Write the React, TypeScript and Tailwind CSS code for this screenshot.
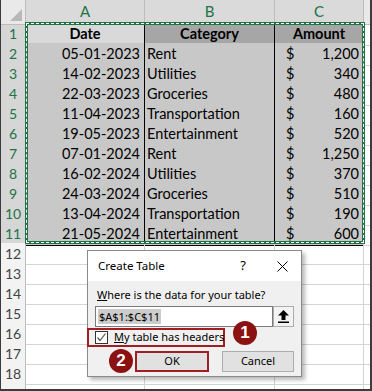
import React from 'react';

const data = [
  ['05-01-2023', 'Rent', '1,200'],
  ['14-02-2023', 'Utilities', '340'],
  ['22-03-2023', 'Groceries', '480'],
  ['11-04-2023', 'Transportation', '160'],
  ['19-05-2023', 'Entertainment', '520'],
  ['07-01-2024', 'Rent', '1,250'],
  ['16-02-2024', 'Utilities', '370'],
  ['24-03-2024', 'Groceries', '510'],
  ['13-04-2024', 'Transportation', '190'],
  ['21-05-2024', 'Entertainment', '600'],
];

const cols = 'grid grid-cols-[25px_119px_130px_89px_1fr]';

function RowHead({ n, selected }: { n?: number; selected?: boolean }) {
  return (
    <div
      className={`flex items-center justify-center border-r border-b border-[#bdbdbd] text-[14px] ${
        selected ? 'bg-[#d6d6d6] text-[#217346]' : 'bg-[#f3f3f3] text-[#444]'
      }`}
    >
      {n}
    </div>
  );
}

function Badge({ n }: { n: string }) {
  return (
    <div className="w-[24px] h-[24px] rounded-full bg-[#8c1212] text-white flex items-center justify-center text-[17px] font-bold font-['Liberation_Sans',sans-serif]">
      {n}
    </div>
  );
}

export default function App() {
  return (
    <div className="relative w-[372px] h-[391px] overflow-hidden bg-white border-l border-r-2 border-b-2 border-[#3c3c3c] font-['Lato',sans-serif] text-[14.5px] text-black">
      {/* column headers */}
      <div className={`${cols} h-[23px]`}>
        <div className="relative bg-[#e9e9e9] border-r border-b border-[#bdbdbd]">
          <svg className="absolute right-[3px] bottom-[3px]" width="12" height="12" viewBox="0 0 12 12">
            <polygon points="12,0 12,12 0,12" fill="#b8b8b8" />
          </svg>
        </div>
        {['A', 'B', 'C'].map(c => (
          <div key={c} className="flex items-end justify-center pb-[1px] bg-[#dadada] border-r border-b border-[#bdbdbd] text-[#217346] text-[15px]">
            {c}
          </div>
        ))}
        <div className="bg-[#e9e9e9] border-b border-[#bdbdbd]" />
      </div>

      {/* header row */}
      <div className={`${cols} h-[20px]`}>
        <RowHead n={1} selected />
        <div className="flex items-center justify-center bg-[#d9d9d9] border-r border-b border-black font-bold">Date</div>
        <div className="flex items-center justify-center bg-[#a6a6a6] border-r border-b border-black font-bold">Category</div>
        <div className="flex items-center justify-center bg-[#a6a6a6] border-r border-b border-black font-bold">Amount</div>
        <div className="border-b border-[#d4d4d4]" />
      </div>

      {/* data rows */}
      {data.map((r, i) => (
        <div key={i} className={`${cols} h-[20px]`}>
          <RowHead n={i + 2} selected />
          <div className="flex items-center justify-end pr-[4px] bg-[#c8c8c8] border-r border-b border-black">{r[0]}</div>
          <div className="flex items-center pl-[2px] bg-[#c8c8c8] border-r border-b border-black">{r[1]}</div>
          <div className="flex items-center justify-between pl-[11px] pr-[4px] bg-[#c8c8c8] border-r border-b border-black">
            <span>$</span>
            <span>{r[2]}</span>
          </div>
          <div className="border-b border-[#d4d4d4]" />
        </div>
      ))}

      {/* empty rows */}
      {[12, 13, 14, 15, 16, 17, 18, 0].map(n => (
        <div key={n} className={`${cols} h-[20px]`}>
          <RowHead n={n || undefined} />
          <div className="border-r border-b border-[#d4d4d4]" />
          <div className="border-r border-b border-[#d4d4d4]" />
          <div className="border-r border-b border-[#d4d4d4]" />
          <div className="border-b border-[#d4d4d4]" />
        </div>
      ))}

      {/* copy selection marquee */}
      <div className="absolute left-[24px] top-[22px] w-[340px] h-[222px] border-[3px] border-[#217346]">
        <div className="absolute -inset-[2px] border border-dashed border-white" />
      </div>

      {/* Create Table dialog */}
      <div className="absolute left-[86px] top-[250px] w-[215px] h-[127px] bg-[#f0f0f0] border border-[#8a8a8a] shadow-[3px_3px_4px_rgba(0,0,0,0.28)] font-['Noto_Sans',sans-serif] text-[11px] text-black">
        <div className="h-[30px] bg-white flex items-center pl-[10px] text-[11.5px]">
          <span className="flex-1">Create Table</span>
          <span className="w-[20px] text-center mr-[24px] text-[13px]">?</span>
          <svg className="mr-[13px]" width="11" height="11" viewBox="0 0 11 11">
            <path d="M0.5 0.5 L10.5 10.5 M10.5 0.5 L0.5 10.5" stroke="#000" strokeWidth="1" />
          </svg>
        </div>
        <div className="pl-[9px] pt-[6px] leading-[16px] whitespace-nowrap">
          <span className="underline">W</span>here is the data for your table?
        </div>
        <div className="flex mt-[3px] ml-[7px] h-[21px]">
          <div className="w-[178px] bg-white border border-[#7a7a7a] flex items-center pl-[2px]">
            <span className="bg-[#cccccc] px-[1px] leading-[15px]">$A$1:$C$11</span>
          </div>
          <div className="w-[21px] border border-[#adadad] bg-[#f3f3f3] flex items-center justify-center">
            <svg width="11" height="13" viewBox="0 0 11 13">
              <polygon points="5.5,0 11,5.5 7.5,5.5 7.5,10 3.5,10 3.5,5.5 0,5.5" fill="#000" />
              <rect x="0" y="11.5" width="11" height="1.5" fill="#000" />
            </svg>
          </div>
        </div>
        <div className="flex items-center mt-[1px] -ml-px w-[138px] h-[19px] border-2 border-[#a11d21] pl-[6px] whitespace-nowrap">
          <div className="shrink-0 w-[13px] h-[13px] border border-[#333] bg-white flex items-center justify-center">
            <svg width="11" height="11" viewBox="0 0 11 11">
              <path d="M1.5 5.5 L4 8.5 L9.5 1.5" stroke="#555" strokeWidth="1.2" fill="none" />
            </svg>
          </div>
          <span className="ml-[6px]">
            <span className="underline">M</span>y table has headers
          </span>
        </div>
        <div className="flex mt-[4px] h-[21px]">
          <div className="ml-[47px] w-[74px] border-2 border-[#a11d21] bg-[#e1e1e1] flex items-center justify-center">
            OK
          </div>
          <div className="ml-[13px] w-[72px] border border-[#adadad] bg-[#e1e1e1] flex items-center justify-center">
            Cancel
          </div>
        </div>
      </div>

      {/* step badges */}
      <div className="absolute left-[232px] top-[321px]">
        <Badge n="1" />
      </div>
      <div className="absolute left-[108px] top-[349px]">
        <Badge n="2" />
      </div>
    </div>
  );
}
